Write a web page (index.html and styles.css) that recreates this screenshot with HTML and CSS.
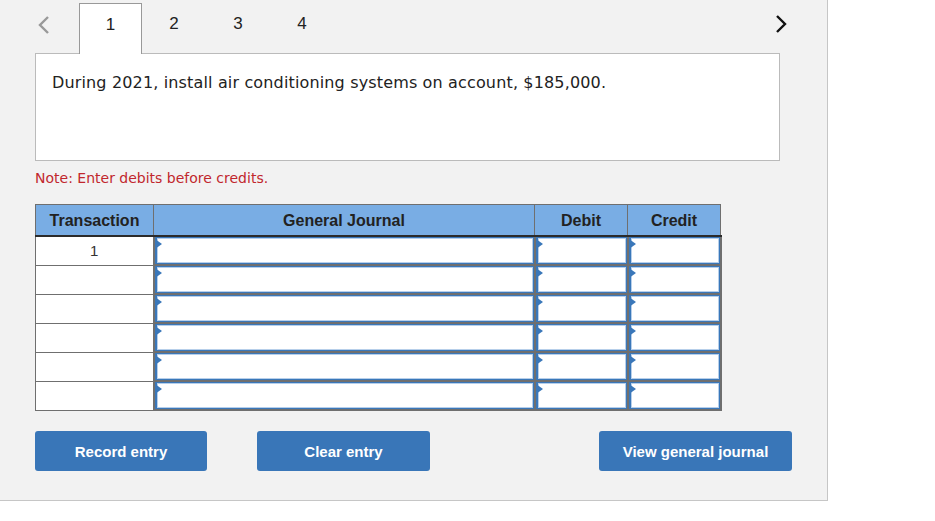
FILE: index.html
```html
<!DOCTYPE html>
<html lang="en">
<head>
    <meta charset="UTF-8">
    <title>Journal entry worksheet</title>
    <link rel="stylesheet" href="styles.css">
</head>
<body>
    <div class="panel">
        <div class="tabs">
            <span class="nav-arrow prev">
                <svg width="14" height="18" viewBox="0 0 14 18"><path d="M11 1 L3 9 L11 17" fill="none" stroke="#999" stroke-width="2.4"/></svg>
            </span>
            <div class="tab active">1</div>
            <div class="tab">2</div>
            <div class="tab">3</div>
            <div class="tab">4</div>
            <span class="nav-arrow next">
                <svg width="14" height="18" viewBox="0 0 14 18"><path d="M3 1 L11 9 L3 17" fill="none" stroke="#111" stroke-width="2.4"/></svg>
            </span>
        </div>

        <div class="question-box">
            During 2021, install air conditioning systems on account, $185,000.
        </div>

        <p class="note">Note: Enter debits before credits.</p>

        <table class="journal">
            <colgroup>
                <col class="col-trans">
                <col class="col-account">
                <col class="col-amount">
                <col class="col-amount">
            </colgroup>
            <thead>
                <tr>
                    <th>Transaction</th>
                    <th>General Journal</th>
                    <th>Debit</th>
                    <th>Credit</th>
                </tr>
            </thead>
            <tbody>
                <tr>
                    <td class="trans">1</td>
                    <td><div class="entry"></div></td>
                    <td><div class="entry"></div></td>
                    <td><div class="entry"></div></td>
                </tr>
                <tr>
                    <td class="trans"></td>
                    <td><div class="entry"></div></td>
                    <td><div class="entry"></div></td>
                    <td><div class="entry"></div></td>
                </tr>
                <tr>
                    <td class="trans"></td>
                    <td><div class="entry"></div></td>
                    <td><div class="entry"></div></td>
                    <td><div class="entry"></div></td>
                </tr>
                <tr>
                    <td class="trans"></td>
                    <td><div class="entry"></div></td>
                    <td><div class="entry"></div></td>
                    <td><div class="entry"></div></td>
                </tr>
                <tr>
                    <td class="trans"></td>
                    <td><div class="entry"></div></td>
                    <td><div class="entry"></div></td>
                    <td><div class="entry"></div></td>
                </tr>
                <tr>
                    <td class="trans"></td>
                    <td><div class="entry"></div></td>
                    <td><div class="entry"></div></td>
                    <td><div class="entry"></div></td>
                </tr>
            </tbody>
        </table>

        <div class="actions">
            <button class="btn btn-record">Record entry</button>
            <button class="btn btn-clear">Clear entry</button>
            <button class="btn btn-view">View general journal</button>
        </div>
    </div>
</body>
</html>
```

FILE: styles.css
```css
body {
    margin: 0;
    background-color: white;
    font-family: "Liberation Sans", Arial, sans-serif;
}
.panel {
    width: 828px;
    height: 501px;
    box-sizing: border-box;
    background-color: #f2f2f2;
    border-right: 1px solid #c6c6c6;
    border-bottom: 1px solid #c6c6c6;
}
.tabs {
    display: flex;
    align-items: flex-end;
    height: 50px;
    padding-top: 3px;
}
.nav-arrow {
    align-self: flex-start;
    display: flex;
}
.nav-arrow.prev {
    margin: 13px 28px 0 37px;
}
.nav-arrow.next {
    margin: 12px 0 0 auto;
    margin-right: 39px;
}
.tab {
    width: 64px;
    height: 50px;
    box-sizing: border-box;
    text-align: center;
    font-size: 17px;
    line-height: 41px;
    color: #222;
}
.tab.active {
    width: 63px;
    background-color: white;
    border: 1px solid #999;
    border-bottom: none;
    margin-bottom: -1px;
    height: 51px;
    position: relative;
    z-index: 1;
}
.question-box {
    margin-left: 35px;
    width: 745px;
    height: 108px;
    box-sizing: border-box;
    background-color: white;
    border: 1px solid #bbb;
    padding: 19px 16px 17px;
    font-family: "DejaVu Sans", Verdana, sans-serif;
    font-size: 16px;
    letter-spacing: 0.15px;
    color: #222;
}
.note {
    margin: 9px 0 0 35px;
    font-family: "DejaVu Sans", Verdana, sans-serif;
    font-size: 14px;
    color: #c1272d;
}
.journal {
    margin: 18px 0 0 35px;
    border-collapse: collapse;
    width: 686px;
    table-layout: fixed;
}
.col-trans {
    width: 118px;
}
.col-account {
    width: 381px;
}
.col-amount {
    width: 93px;
}
.journal th {
    height: 29px;
    padding: 1px 0 0;
    background-color: #79ade4;
    border: 1px solid #6f6f6f;
    border-bottom: 2px solid #2b2b2b;
    border-left-color: #2b2b2b;
    font-size: 16px;
    font-weight: bold;
    color: #222;
}
.journal th:first-child {
    border-left-color: #6f6f6f;
}
.journal td {
    height: 27px;
    padding: 0;
    background-color: white;
    border: 2px solid #6f6f6f;
}
.journal td.trans {
    border-width: 1px 2px 1px 1px;
    text-align: center;
    vertical-align: top;
    padding-top: 5px;
    height: 22px;
    font-size: 15px;
    color: #333;
}
.entry {
    position: relative;
    height: 27px;
    box-sizing: border-box;
    border: 1px solid #3a77b9;
    border-left-width: 2px;
    box-shadow: inset 0 0 0 1px #b7cfea;
}
.entry::before {
    content: "";
    position: absolute;
    left: -2px;
    top: 1px;
    border-left: 7px solid #3a77b9;
    border-top: 5px solid transparent;
    border-bottom: 5px solid transparent;
}
.actions {
    display: flex;
    margin: 20px 0 0 35px;
}
.btn {
    height: 40px;
    border: none;
    border-radius: 3px;
    background-color: #3976b8;
    color: white;
    font-family: "Liberation Sans", Arial, sans-serif;
    font-size: 15px;
    font-weight: bold;
    cursor: pointer;
}
.btn-record {
    width: 172px;
}
.btn-clear {
    width: 173px;
    margin-left: 50px;
}
.btn-view {
    width: 193px;
    margin-left: 169px;
}
```
